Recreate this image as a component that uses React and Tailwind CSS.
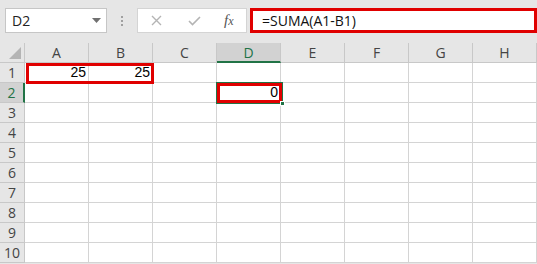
import React from 'react';

const cols = ['A', 'B', 'C', 'D', 'E', 'F', 'G', 'H'];
const rows = [1, 2, 3, 4, 5, 6, 7, 8, 9, 10];

const values = { A1: '25', B1: '25', D2: '0' };

function HeaderCell({ label, active }) {
  return (
    <div
      className={`h-[20px] flex items-center justify-center border-r border-[#c8c8c8] text-[14px] ${
        active ? 'bg-[#d2d2d2] text-[#217346] border-b-2 border-b-[#217346]' : 'bg-[#e6e6e6] text-[#444] border-b border-b-[#c8c8c8]'
      }`}
    >
      {label}
    </div>
  );
}

function RowHeader({ n, active }) {
  return (
    <div
      className={`h-[20px] flex items-center justify-center border-b border-[#c8c8c8] text-[14px] ${
        active ? 'bg-[#d2d2d2] text-[#217346] border-r-2 border-r-[#217346]' : 'bg-[#e6e6e6] text-[#444] border-r border-r-[#c8c8c8]'
      }`}
    >
      {n}
    </div>
  );
}

export default function App() {
  return (
    <div
      className="relative w-[537px] h-[264px] overflow-hidden bg-[#e6e6e6]"
      style={{ fontFamily: '"Open Sans", "Liberation Sans", sans-serif' }}
    >
      {/* formula bar */}
      <div className="h-[43px] flex items-start pt-[8px] pl-[5px]">
        <div className="w-[102px] h-[25px] bg-white border border-[#c6c6c6] flex items-center justify-between pl-[6px] pr-[5px] text-[14px] text-[#222]">
          <span>D2</span>
          <svg width="9" height="5" viewBox="0 0 9 5">
            <path d="M0 0 H9 L4.5 5 Z" fill="#707070" />
          </svg>
        </div>
        <div className="w-[30px] h-[25px] flex flex-col items-center justify-center gap-[2px]">
          <span className="w-[2px] h-[2px] bg-[#a0a0a0]" />
          <span className="w-[2px] h-[2px] bg-[#a0a0a0]" />
          <span className="w-[2px] h-[2px] bg-[#a0a0a0]" />
        </div>
        <div className="w-[110px] h-[25px] bg-white border border-[#d4d4d4] flex items-center">
          <svg className="ml-[13px]" width="11" height="11" viewBox="0 0 11 11">
            <path d="M1 1 L10 10 M10 1 L1 10" stroke="#b4b4b4" strokeWidth="1.4" />
          </svg>
          <svg className="ml-[26px]" width="13" height="10" viewBox="0 0 13 10">
            <path d="M1 5 L4.5 8.5 L12 1" stroke="#b4b4b4" strokeWidth="1.6" fill="none" />
          </svg>
          <span
            className="ml-[23px] text-[15px] italic text-[#555] leading-none"
            style={{ fontFamily: '"Liberation Serif", serif' }}
          >
            f<span className="text-[12px]">x</span>
          </span>
        </div>
        <div className="ml-[3px] w-[287px] h-[25px] bg-white border-[3px] border-[#e00000] flex items-center pl-[9px] text-[14px] text-[#111]">
          =SUMA(A1-B1)
        </div>
      </div>

      {/* grid */}
      <div className="grid grid-cols-[25px_repeat(8,64px)] bg-white">
        <div className="h-[20px] bg-[#e6e6e6] border-r border-b border-[#c8c8c8] flex items-end justify-end p-[3px]">
          <svg width="12" height="12" viewBox="0 0 12 12">
            <path d="M12 0 V12 H0 Z" fill="#b4b4b4" />
          </svg>
        </div>
        {cols.map((c) => (
          <HeaderCell key={c} label={c} active={c === 'D'} />
        ))}
        {rows.map((r) => (
          <React.Fragment key={r}>
            <RowHeader n={r} active={r === 2} />
            {cols.map((c) => (
              <div
                key={c}
                className="h-[20px] border-r border-b border-[#d4d4d4] flex items-center justify-end pr-[2px] text-[14px] text-black"
                style={{ fontFamily: '"Liberation Sans", sans-serif' }}
              >
                {values[c + r] || ''}
              </div>
            ))}
          </React.Fragment>
        ))}
      </div>

      {/* highlights */}
      <div className="absolute left-[26px] top-[63px] w-[128px] h-[21px] border-[3px] border-[#e00000]" />
      <div className="absolute left-[216px] top-[82px] w-[67px] h-[22px] border-2 border-[#217346]" />
      <div className="absolute left-[217px] top-[83px] w-[65px] h-[20px] border-[3px] border-[#e00000]" />
      <div className="absolute left-[280px] top-[101px] w-[5px] h-[5px] bg-[#217346] border border-white" />
    </div>
  );
}
